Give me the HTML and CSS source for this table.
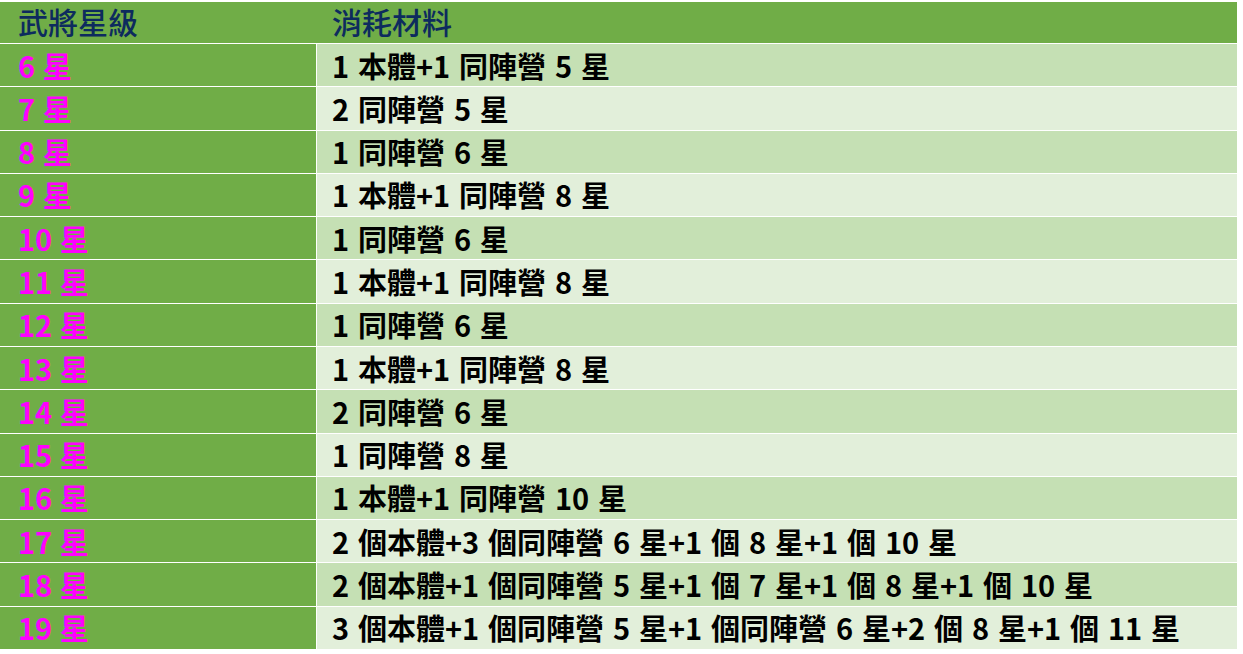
FILE: index.html
```html
<!DOCTYPE html>
<html lang="zh-Hant">
<head>
<meta charset="utf-8">
<link rel="stylesheet" href="styles.css">
</head>
<body>
<div class="table">
  <div class="row head">
    <div class="c1">武將星級</div>
    <div class="c2">消耗材料</div>
  </div>
  <div class="row odd"><div class="c1">6 星</div><div class="c2">1 本體+1 同陣營 5 星</div></div>
  <div class="row even"><div class="c1">7 星</div><div class="c2">2 同陣營 5 星</div></div>
  <div class="row odd"><div class="c1">8 星</div><div class="c2">1 同陣營 6 星</div></div>
  <div class="row even"><div class="c1">9 星</div><div class="c2">1 本體+1 同陣營 8 星</div></div>
  <div class="row odd"><div class="c1">10 星</div><div class="c2">1 同陣營 6 星</div></div>
  <div class="row even"><div class="c1">11 星</div><div class="c2">1 本體+1 同陣營 8 星</div></div>
  <div class="row odd"><div class="c1">12 星</div><div class="c2">1 同陣營 6 星</div></div>
  <div class="row even"><div class="c1">13 星</div><div class="c2">1 本體+1 同陣營 8 星</div></div>
  <div class="row odd"><div class="c1">14 星</div><div class="c2">2 同陣營 6 星</div></div>
  <div class="row even"><div class="c1">15 星</div><div class="c2">1 同陣營 8 星</div></div>
  <div class="row odd"><div class="c1">16 星</div><div class="c2">1 本體+1 同陣營 10 星</div></div>
  <div class="row even"><div class="c1">17 星</div><div class="c2">2 個本體+3 個同陣營 6 星+1 個 8 星+1 個 10 星</div></div>
  <div class="row odd"><div class="c1">18 星</div><div class="c2">2 個本體+1 個同陣營 5 星+1 個 7 星+1 個 8 星+1 個 10 星</div></div>
  <div class="row even"><div class="c1">19 星</div><div class="c2">3 個本體+1 個同陣營 5 星+1 個同陣營 6 星+2 個 8 星+1 個 11 星</div></div>
</div>
</body>
</html>
```
FILE: styles.css
```css
html, body {
  margin: 0;
  padding: 0;
  background: #ffffff;
}
body {
  padding-top: 2px;
  font-family: "Noto Sans CJK TC", "Noto Sans CJK SC", sans-serif;
}
.table {
  width: 1237px;
  display: flex;
  flex-direction: column;
}
.row {
  display: flex;
  height: 42.29px;
  border-top: 1px solid #ffffff;
  font-size: 29px;
  font-weight: 700;
  line-height: 1;
}
.row .c1 {
  width: 316px;
  flex: none;
  padding-left: 18px;
  box-sizing: border-box;
  background: #70ad47;
  color: #ff00ff;
  display: flex;
  align-items: center;
  word-spacing: 1px;
}
.row .c2 {
  flex: 1;
  border-left: 1px solid #ffffff;
  padding-left: 15px;
  display: flex;
  align-items: center;
  color: #000000;
  word-spacing: 2.3px;
}
.row.odd .c2 { background: #c5e0b4; }
.row.even .c2 { background: #e2efda; }
.row.head {
  height: 41px;
  border-top: none;
  background: #70ad47;
  font-weight: 500;
  font-size: 30px;
  color: #0d2b5e;
}
.row.head .c1, .row.head .c2 {
  background: #70ad47;
  color: #0d2b5e;
  border-left: none;
  padding-bottom: 4px;
  box-sizing: border-box;
}
.row.head .c2 { padding-left: 16px; }
```
